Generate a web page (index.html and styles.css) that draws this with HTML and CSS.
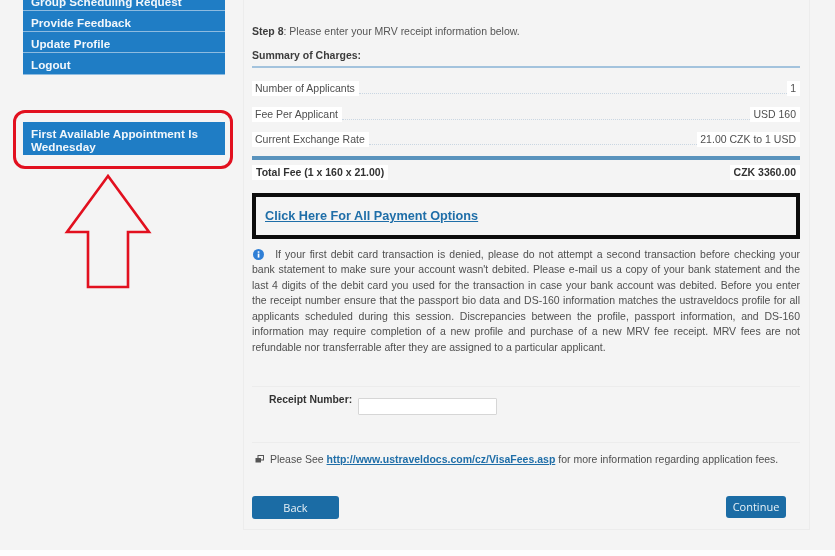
FILE: index.html
```html
<!DOCTYPE html>
<html lang="en">
<head>
<meta charset="utf-8">
<title>Step 8 - MRV Receipt</title>
<link rel="stylesheet" href="styles.css">
</head>
<body>
<div class="page">
  <aside class="sidebar">
    <ul class="menu">
      <li class="menu-item"><a>Group Scheduling Request</a></li>
      <li class="menu-item"><a>Provide Feedback</a></li>
      <li class="menu-item"><a>Update Profile</a></li>
      <li class="menu-item"><a>Logout</a></li>
    </ul>
    <div class="notice">First Available Appointment Is Wednesday</div>
    <div class="callout"></div>
    <svg class="arrow" width="90" height="118" viewBox="0 0 90 118">
      <path d="M44 3 L3 59 L24 59 L24 114 L64 114 L64 59 L85 59 Z" fill="none" stroke="#e2101f" stroke-width="2.6"/>
    </svg>
  </aside>
  <main class="panel">
    <p class="step"><b>Step 8</b>: Please enter your MRV receipt information below.</p>
    <h2 class="summary">Summary of Charges:</h2>
    <div class="charges">
      <div class="charge"><span class="tag">Number of Applicants</span><span class="dots"></span><span class="tag">1</span></div>
      <div class="charge"><span class="tag">Fee Per Applicant</span><span class="dots"></span><span class="tag">USD 160</span></div>
      <div class="charge"><span class="tag">Current Exchange Rate</span><span class="dots"></span><span class="tag">21.00 CZK to 1 USD</span></div>
    </div>
    <div class="total"><span class="tag">Total Fee (1 x 160 x 21.00)</span><span class="tag">CZK 3360.00</span></div>
    <div class="pay"><a class="link pay-link">Click Here For All Payment Options</a></div>
    <p class="info">
      <svg class="info-icon" width="11" height="11" viewBox="0 0 11 11"><circle cx="5.5" cy="5.5" r="5.5" fill="#2f7fd6"/><rect x="4.7" y="4.6" width="1.7" height="4" fill="#fff"/><rect x="4.7" y="2.3" width="1.7" height="1.5" fill="#fff"/></svg>
      If your first debit card transaction is denied, please do not attempt a second transaction before checking your bank statement to make sure your account wasn't debited. Please e-mail us a copy of your bank statement and the last 4 digits of the debit card you used for the transaction in case your bank account was debited. Before you enter the receipt number ensure that the passport bio data and DS-160 information matches the ustraveldocs profile for all applicants scheduled during this session. Discrepancies between the profile, passport information, and DS-160 information may require completion of a new profile and purchase of a new MRV fee receipt. MRV fees are not refundable nor transferrable after they are assigned to a particular applicant.
    </p>
    <div class="receipt">
      <label class="receipt-label" for="rn">Receipt Number:</label>
      <input class="receipt-input" id="rn" type="text">
    </div>
    <p class="see">
      <svg class="see-icon" width="9" height="8" viewBox="0 0 9 8"><rect x="3" y="0.5" width="5.5" height="4.5" fill="none" stroke="#555" stroke-width="1"/><rect x="0.5" y="3" width="5.5" height="4.5" fill="#555"/></svg>
      Please See <a class="link see-link">http://www.ustraveldocs.com/cz/VisaFees.asp</a> for more information regarding application fees.
    </p>
    <div class="actions">
      <button class="btn btn-back">Back</button>
      <button class="btn btn-continue">Continue</button>
    </div>
  </main>
</div>
</body>
</html>
```
FILE: styles.css
```css
* { box-sizing: border-box; }
html, body { margin: 0; padding: 0; height: 556px; overflow: hidden; background: #fdfdfd; }
body { font-family: "Liberation Sans", Arial, sans-serif; color: #4f4f4f; font-size: 10.5px; }
.page {
  display: flex;
  height: 550px;
  background: #f4f4f4;
  overflow: hidden;
  align-items: flex-start;
  filter: blur(0.35px);
}
.sidebar {
  position: relative;
  width: 202px;
  margin-left: 23px;
  margin-right: 18px;
  flex: none;
  height: 550px;
}
.menu {
  list-style: none;
  margin: -10.5px 0 0;
  padding: 0;
}
.menu-item {
  height: 21.3px;
  background: #1f7dc5;
  border-bottom: 1px solid #8dbbe0;
  color: #f2f7fb;
  font-weight: bold;
  font-size: 11.7px;
  line-height: 23px;
  padding-left: 8px;
}
.notice {
  margin-top: 47px;
  height: 33.3px;
  padding: 5px 8px 0;
  background: #1f7dc5;
  color: #f2f7fb;
  font-weight: bold;
  font-size: 11.7px;
  line-height: 13px;
}
.callout {
  position: absolute;
  left: -10px;
  top: 110px;
  width: 220px;
  height: 59px;
  border: 3px solid #e2101f;
  border-radius: 12px;
}
.arrow {
  position: absolute;
  left: 41px;
  top: 173px;
}
.panel {
  width: 567px;
  height: 530px;
  padding: 0 9px 0 8px;
  border-right: 1px solid #ececec;
  border-left: 1px solid #ececec;
  border-bottom: 1px solid #ececec;
}
.step { margin: 25px 0 0; line-height: 13px; color: #555; }
.step b { color: #3c3c3c; }
.summary {
  margin: 11px 0 0;
  height: 19px;
  line-height: 13px;
  font-size: 10.5px;
  color: #3c3c3c;
  border-bottom: 2px solid #a3c3dd;
}
.charges { padding-top: 3px; }
.charge {
  display: flex;
  align-items: flex-end;
  height: 25.3px;
}
.tag {
  background: #fff;
  padding: 2px 4px 2px 3px;
  line-height: 11px;
  white-space: nowrap;
}
.dots {
  flex: 1;
  border-bottom: 1px dotted #c9d6e2;
  margin-bottom: 2px;
}
.total {
  margin-top: 9px;
  height: 28px;
  border-top: 4px solid #5a93bd;
  padding-top: 5px;
  display: flex;
  justify-content: space-between;
  font-weight: bold;
  color: #333;
}
.total .tag { height: 15px; padding-left: 4px; }
.pay {
  margin-top: 9px;
  height: 46px;
  border: 4px solid #0c0c0c;
  padding-left: 9px;
  display: flex;
  align-items: center;
}
.link { color: #1f6ea8; font-weight: bold; text-decoration: underline; }
.pay-link { font-size: 12.7px; }
.info {
  margin: 8px 0 0;
  line-height: 15.5px;
  text-align: justify;
  height: 139px;
}
.info-icon { margin: 0 7px -2px 1px; }
.receipt {
  display: flex;
  align-items: flex-start;
  height: 57px;
  border-top: 1px solid #ececec;
  border-bottom: 1px solid #ececec;
  padding-top: 11px;
  padding-left: 17px;
}
.receipt-label { font-weight: bold; color: #333; font-size: 10.4px; line-height: 12px; width: 89px; margin-top: -4px; }
.receipt-input {
  width: 139px;
  height: 17px;
  background: #fff;
  border: 1px solid #d6d6d6;
  border-radius: 1px;
  padding: 0;
}
.see { margin: 10px 0 0 3px; line-height: 13px; }
.see-icon { margin-right: 3px; }
.actions {
  display: flex;
  justify-content: space-between;
  margin-top: 30px;
}
.btn {
  border: 0;
  color: #e8f1f7;
  background: #1b6ca5;
  font-family: "Open Sans", "Liberation Sans", sans-serif;
  font-size: 11px;
  height: 23px;
  padding: 0;
}
.btn-back { width: 87px; border-radius: 3px; }
.btn-continue { width: 60px; margin-right: 14px; border-radius: 3px; height: 22px; }
```
